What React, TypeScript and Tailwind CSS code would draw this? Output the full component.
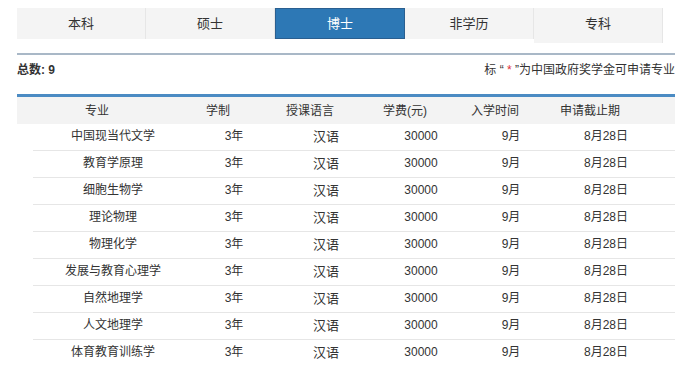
import React from 'react'

const tabs = ['本科', '硕士', '博士', '非学历', '专科']

const rows = [
  '中国现当代文学',
  '教育学原理',
  '细胞生物学',
  '理论物理',
  '物理化学',
  '发展与教育心理学',
  '自然地理学',
  '人文地理学',
  '体育教育训练学',
]

const cols = 'grid grid-cols-[160px_82px_102px_88px_92px_98px_1fr] items-center'

export default function App() {
  return (
    <div
      className="w-[686px] h-[365px] overflow-hidden bg-white pl-[17px] pt-[8px] text-[#333]"
      style={{ fontFamily: '"Liberation Sans", "Noto Sans CJK SC", sans-serif' }}
    >
      {/* tabs */}
      <div className="flex items-start w-[646px]">
        {tabs.map((t, i) => {
          const active = i === 2
          return (
            <div
              key={t}
              className={`flex-1 flex items-center justify-center text-[13px] ${
                i === 4 ? 'h-[35px] pb-[4px]' : 'h-[31px]'
              } ${
                active
                  ? 'bg-[#2d78b5] border border-[#2a5f90] text-white'
                  : 'bg-[#f4f4f4] border-r border-[#e6e6e6] text-[#333]'
              }`}
            >
              {t}
            </div>
          )
        })}
      </div>
      <div className="w-[658px] mt-[10px] border-t-2 border-[#a9b8c7]" />

      {/* totals */}
      <div className="w-[658px] mt-[7px] flex justify-between items-center text-[12px] h-[16px]">
        <span className="font-bold">总数: 9</span>
        <span>
          标 “ <span className="text-[#e0303a]">*</span> ”为中国政府奖学金可申请专业
        </span>
      </div>

      {/* table */}
      <div className="w-[658px] mt-[16px] border-t-[3px] border-[#4b8bc3]">
        <div className={`${cols} h-[27px] bg-[#f3f3f3] text-[12px]`}>
          <div className="text-center">专业</div>
          <div className="text-center">学制</div>
          <div className="text-center">授课语言</div>
          <div className="text-center">学费(元)</div>
          <div className="text-center">入学时间</div>
          <div className="text-center">申请截止期</div>
          <div />
        </div>
        <div className="ml-[16px]">
          {rows.map((r) => (
            <div key={r} className={`${cols} h-[27px] pb-[3px] border-b border-[#e6e6e6] text-[12px]`}>
              <div className="text-center">{r}</div>
              <div className="text-center">3年</div>
              <div className="text-center text-[13px] pt-[3px]">汉语</div>
              <div className="text-center">30000</div>
              <div className="text-center">9月</div>
              <div className="text-center">8月28日</div>
              <div />
            </div>
          ))}
        </div>
      </div>
    </div>
  )
}
